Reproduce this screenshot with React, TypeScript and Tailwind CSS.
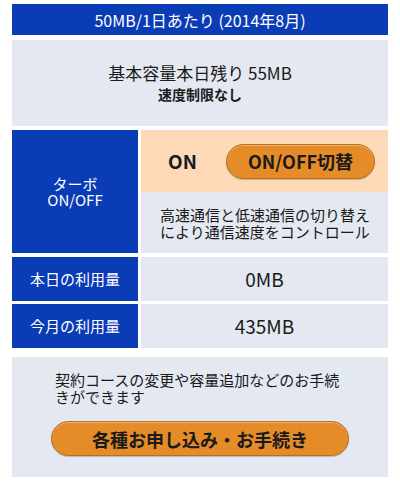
import React from "react";

const font = { fontFamily: '"Noto Sans CJK JP", "Noto Sans", sans-serif' };

export default function App() {
  return (
    <div className="w-[400px] h-[486px] bg-white px-3 pt-1 text-[#1a1a1a]" style={font}>
      <div className="h-[31px] bg-[#0a3cb5] text-white text-[16px] flex items-center justify-center leading-none">
        50MB/1日あたり (2014年8月)
      </div>
      <div className="mt-[5px] h-[86px] bg-[#e4e8f1] flex flex-col items-center justify-center">
        <div className="text-[17px] leading-[22px]">基本容量本日残り 55MB</div>
        <div className="text-[14px] font-bold leading-[20px]">速度制限なし</div>
      </div>
      <div className="mt-1 flex gap-[3px] h-[123px]">
        <div className="w-[126px] bg-[#0a3cb5] text-white text-[15px] leading-[16px] flex flex-col items-center justify-center">
          <div>ターボ</div>
          <div>ON/OFF</div>
        </div>
        <div className="flex-1 flex flex-col">
          <div className="h-[62px] bg-[#fdd9b8] flex items-center pl-[27px]">
            <span className="text-[19px] font-bold w-[58px]">ON</span>
            <button className="w-[149px] h-[35px] rounded-full bg-[#e58c28] border border-[#b8701e] shadow-[inset_0_1px_0_rgba(255,255,255,0.35),0_1px_1px_rgba(0,0,0,0.2)] text-[18px] font-bold text-[#1a1a1a] leading-none">
              ON/OFF切替
            </button>
          </div>
          <div className="flex-1 bg-[#e4e8f1] flex items-center pl-[19px] text-[15px] leading-[17px]">
            <div>
              高速通信と低速通信の切り替え
              <br />
              により通信速度をコントロール
            </div>
          </div>
        </div>
      </div>
      <div className="mt-1 flex gap-[3px] h-[44px]">
        <div className="w-[126px] bg-[#0a3cb5] text-white text-[15px] flex items-center justify-center">
          本日の利用量
        </div>
        <div className="flex-1 bg-[#e4e8f1] flex items-center justify-center text-[19px]">0MB</div>
      </div>
      <div className="mt-[3px] flex gap-[3px] h-[44px]">
        <div className="w-[126px] bg-[#0a3cb5] text-white text-[15px] flex items-center justify-center">
          今月の利用量
        </div>
        <div className="flex-1 bg-[#e4e8f1] flex items-center justify-center text-[19px]">435MB</div>
      </div>
      <div className="mt-[9px] h-[120px] bg-[#e4e8f1] flex flex-col items-center pt-[14px]">
        <div className="w-[290px] text-[15px] leading-[17px]">
          契約コースの変更や容量追加などのお手続
          <br />
          きができます
        </div>
        <button className="mt-[16px] w-[298px] h-[35px] rounded-full bg-[#e58c28] border border-[#b8701e] shadow-[inset_0_1px_0_rgba(255,255,255,0.35),0_1px_1px_rgba(0,0,0,0.2)] text-[18px] font-bold text-[#1a1a1a] leading-none">
          各種お申し込み・お手続き
        </button>
      </div>
    </div>
  );
}
